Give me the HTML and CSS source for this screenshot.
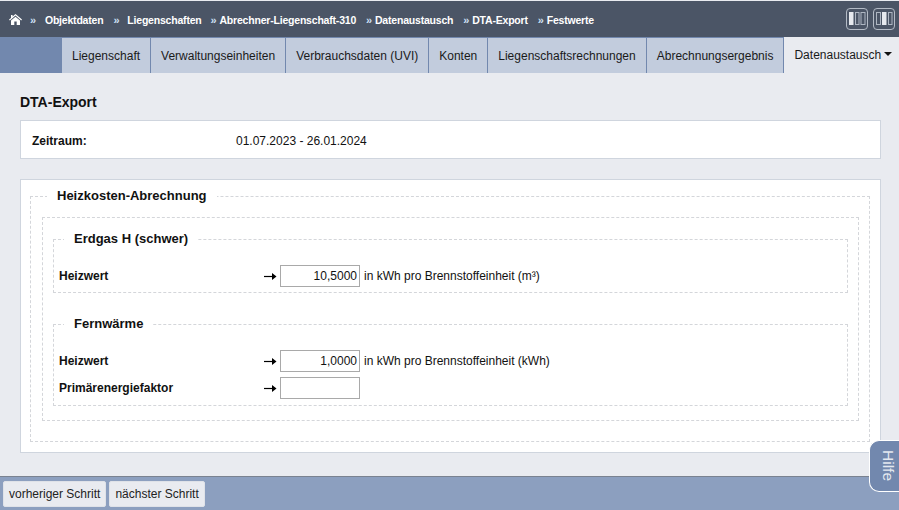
FILE: index.html
```html
<!DOCTYPE html>
<html lang="de">
<head>
<meta charset="utf-8">
<title>DTA-Export</title>
<link rel="stylesheet" href="styles.css">
</head>
<body>
<div class="page">
  <header class="topbar">
    <nav class="crumbs">
      <svg class="home" width="13" height="11" viewBox="0 0 13 11"><path fill="#fff" d="M6.5 0 L13 5.6 L12.2 6.4 L6.5 1.6 L.8 6.4 L0 5.6 L2 3.9 V1 H3.6 V2.5 Z M2 6.6 L6.5 2.8 L11 6.6 V11 H7.7 V7.6 H5.3 V11 H2 Z"/></svg>
      <span class="sep s1">»</span><a class="crumb c1">Objektdaten</a>
      <span class="sep s2">»</span><a class="crumb c2">Liegenschaften</a>
      <span class="sep">»</span><a class="crumb c4">Abrechner-Liegenschaft-310</a>
      <span class="sep">»</span><a class="crumb c3">Datenaustausch</a>
      <span class="sep">»</span><a class="crumb c3">DTA-Export</a>
      <span class="sep">»</span><a class="crumb">Festwerte</a>
    </nav>
    <div class="layout-btns">
      <span class="lbtn">
        <svg width="20" height="13" viewBox="0 0 20 13"><rect x="2" y="0" width="4.5" height="13" fill="#e6e9ee"/><rect x="8.5" y=".5" width="3.5" height="12" fill="none" stroke="#aeb6c2"/><rect x="14" y=".5" width="4" height="12" fill="none" stroke="#aeb6c2"/></svg>
      </span>
      <span class="lbtn">
        <svg width="20" height="13" viewBox="0 0 20 13"><rect x="2.5" y=".5" width="4" height="12" fill="none" stroke="#aeb6c2"/><rect x="8" y="0" width="4.5" height="13" fill="#e6e9ee"/><rect x="14.5" y=".5" width="3.5" height="12" fill="none" stroke="#aeb6c2"/></svg>
      </span>
    </div>
  </header>
  <nav class="tabs">
    <a class="tab">Liegenschaft</a>
    <a class="tab">Verwaltungseinheiten</a>
    <a class="tab">Verbrauchsdaten (UVI)</a>
    <a class="tab">Konten</a>
    <a class="tab">Liegenschaftsrechnungen</a>
    <a class="tab">Abrechnungsergebnis</a>
    <a class="tab active">Datenaustausch<i class="caret"></i></a>
  </nav>
  <main class="content">
    <h1 class="title">DTA-Export</h1>
    <section class="card period">
      <span class="period-label">Zeitraum:</span>
      <span>01.07.2023 - 26.01.2024</span>
    </section>
    <section class="card form-card">
      <fieldset class="fs outer">
        <legend class="lg lg-outer">Heizkosten-Abrechnung</legend>
        <div class="middle">
          <fieldset class="fs inner first">
            <legend class="lg">Erdgas H (schwer)</legend>
            <div class="row">
              <label class="row-label">Heizwert</label>
              <svg class="arrow" width="13" height="9" viewBox="0 0 13 9"><path d="M0 4.5H9" stroke="#000" stroke-width="1.2"/><path d="M8 1L12.5 4.5L8 8Z" fill="#000"/></svg>
              <input class="num" type="text" value="10,5000">
              <span class="unit">in kWh pro Brennstoffeinheit (m³)</span>
            </div>
          </fieldset>
          <fieldset class="fs inner second">
            <legend class="lg">Fernwärme</legend>
            <div class="row">
              <label class="row-label">Heizwert</label>
              <svg class="arrow" width="13" height="9" viewBox="0 0 13 9"><path d="M0 4.5H9" stroke="#000" stroke-width="1.2"/><path d="M8 1L12.5 4.5L8 8Z" fill="#000"/></svg>
              <input class="num" type="text" value="1,0000">
              <span class="unit">in kWh pro Brennstoffeinheit (kWh)</span>
            </div>
            <div class="row">
              <label class="row-label">Primärenergiefaktor</label>
              <svg class="arrow" width="13" height="9" viewBox="0 0 13 9"><path d="M0 4.5H9" stroke="#000" stroke-width="1.2"/><path d="M8 1L12.5 4.5L8 8Z" fill="#000"/></svg>
              <input class="num" type="text" value="">
            </div>
          </fieldset>
        </div>
      </fieldset>
    </section>
  </main>
  <footer class="footer">
    <button class="btn" type="button">vorheriger Schritt</button>
    <button class="btn" type="button">nächster Schritt</button>
  </footer>
  <a class="help"><span>Hilfe</span></a>
</div>
</body>
</html>
```
FILE: styles.css
```css
* { box-sizing: border-box; }
html, body { margin: 0; padding: 0; }
body { font-family: "Liberation Sans", Arial, sans-serif; font-size: 12px; color: #111; background: #e9ebf0; overflow: hidden; }
.page { position: relative; width: 899px; height: 510px; display: flex; flex-direction: column; padding-top: 1px; }

.topbar { height: 36px; background: #4b5566; display: flex; align-items: center; justify-content: space-between; padding: 0 4px 0 9px; flex: none; }
.crumbs { display: flex; align-items: center; color: #fff; font-weight: 700; font-size: 10.5px; letter-spacing: -.2px; padding-top: 1px; }
.home { margin-right: 8px; }
.sep { color: #cfe0f5; font-size: 11px; margin-right: 3px; }
.s1 { margin-right: 9px; }
.s2 { margin-right: 8px; }
.c1, .c3 { margin-right: 10px; }
.c2 { margin-right: 9px; }
.c4 { margin-right: 10px; }
.layout-btns { display: flex; gap: 5px; margin-top: -1px; }
.lbtn { width: 22px; height: 22px; border: 1px solid #b4bbc6; border-radius: 4px; display: flex; align-items: center; justify-content: center; }

.tabs { height: 36px; background: #7288ae; display: flex; padding-left: 62px; flex: none; }
.tab { display: flex; align-items: center; padding: 0 10px; background: #c2ccdd; border-right: 1px solid #7288ae; border-top: 1px solid #7288ae; color: #1a1a1a; white-space: nowrap; }
.tab.active { background: #e9ebf0; border: 0; padding: 0 5px 0 10px; flex: 1; }
.caret { display: inline-block; margin-left: 3px; margin-top: -2px; border: 4px solid transparent; border-top: 4px solid #111; border-bottom: 0; }

.content { flex: 1; padding: 21px 18px 0 20px; }
.title { margin: 0 0 9px; font-size: 14px; line-height: 17px; font-weight: 700; }
.card { background: #fff; border: 1px solid #cfd5de; }
.period { height: 39px; display: flex; align-items: center; padding: 2px 0 0 11px; margin-bottom: 20px; }
.period-label { width: 204px; font-weight: 700; }
.form-card { height: 274px; padding: 8px 10px 0 9px; }

.fs { margin: 0; min-width: 0; border: 1px dashed #d4d6da; }
.lg { font-size: 13px; font-weight: 700; padding: 0 10px; margin-left: 5px; line-height: 16px; }
.outer > .lg-outer { margin-left: 5px; }
.outer { height: 254px; padding: 13px 10px 0 11px; }
.middle { border: 1px dashed #d4d6da; height: 204px; padding: 13px 10px 0 10px; }
.inner { padding: 0 5px; }
.first { height: 62px; padding-top: 18px; margin-bottom: 23px; }
.second { height: 90px; padding-top: 18px; }
.row { display: flex; align-items: center; height: 22px; margin-bottom: 5px; }
.row-label { width: 204px; font-weight: 700; }
.arrow { width: 13px; margin: 0 3px 0 1px; flex: none; }
.num { width: 80px; height: 22px; border: 1px solid #a9a9a9; background: #fff; text-align: right; padding: 0 2px; font: 12px "Liberation Sans", Arial, sans-serif; color: #111; }
.unit { margin-left: 4px; }

.footer { height: 34px; flex: none; background: #8c9fbf; border-top: 1px solid #7a8290; display: flex; align-items: flex-start; padding: 4px 0 0 3px; gap: 3px; }
.btn { height: 26px; border: 1px solid #dfe2e8; border-radius: 2px; background: #e9ebf0; padding: 0 5px; font: 12px "Liberation Sans", Arial, sans-serif; color: #222; }

.help { position: absolute; left: 869px; top: 440px; width: 31px; height: 52px; background: #7288ae; border: 1px solid #fff; border-right: 0; border-radius: 10px 0 0 10px; display: flex; align-items: center; justify-content: center; padding-left: 6px; }
.help span { writing-mode: vertical-rl; color: #e4e8f0; font-size: 15.5px; }
```
